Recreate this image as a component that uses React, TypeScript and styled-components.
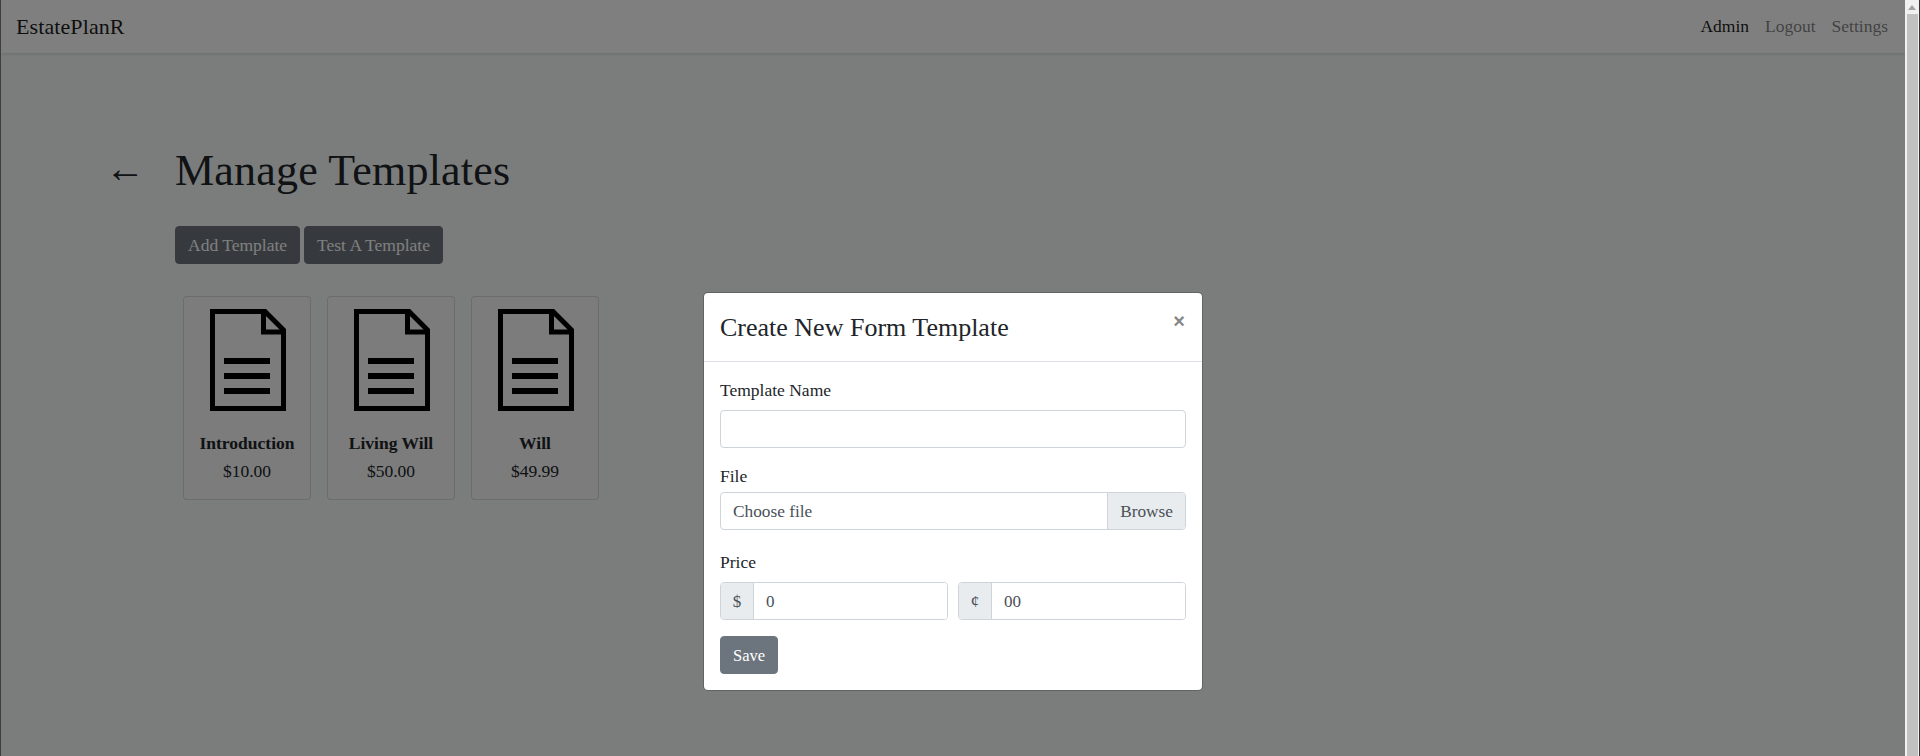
// Library
import styled, { createGlobalStyle } from "styled-components";

/*-----------------------------------------------------------------------------------*/

const templates = [
  { name: "Introduction", price: "$10.00" },
  { name: "Living Will", price: "$50.00" },
  { name: "Will", price: "$49.99" },
];

const FileIcon = () => (
  <svg width="76" height="102" viewBox="0 0 76 102" fill="none" stroke="#000">
    <path d="M2.5 2.5H55L73.5 21V99.5H2.5Z" strokeWidth="5" />
    <path d="M53.5 3V23H74" strokeWidth="5" />
    <path d="M14 52H60M14 67H60M14 82H60" strokeWidth="6" />
  </svg>
);

export default function App() {
  return (
    <Shell>
      <GlobalStyle />
      <Page>
        <Navbar>
          <Brand>EstatePlanR</Brand>
          <NavLinks>
            <NavLink $active>Admin</NavLink>
            <NavLink>Logout</NavLink>
            <NavLink>Settings</NavLink>
          </NavLinks>
        </Navbar>
        <Main>
          <BackArrow>←</BackArrow>
          <Column>
            <Title>Manage Templates</Title>
            <Actions>
              <ActionButton>Add Template</ActionButton>
              <ActionButton>Test A Template</ActionButton>
            </Actions>
            <Cards>
              {templates.map((t) => (
                <Card key={t.name}>
                  <FileIcon />
                  <CardName>{t.name}</CardName>
                  <CardPrice>{t.price}</CardPrice>
                </Card>
              ))}
            </Cards>
          </Column>
        </Main>
        <Backdrop>
          <Modal>
            <ModalHeader>
              <ModalTitle>Create New Form Template</ModalTitle>
              <Close>×</Close>
            </ModalHeader>
            <ModalBody>
              <Label>Template Name</Label>
              <Input />
              <FileLabel>File</FileLabel>
              <FileField>
                <FileText>Choose file</FileText>
                <Browse>Browse</Browse>
              </FileField>
              <Label>Price</Label>
              <PriceRow>
                <PriceGroup>
                  <Addon>$</Addon>
                  <PriceInput defaultValue="0" />
                </PriceGroup>
                <PriceGroup>
                  <Addon>¢</Addon>
                  <PriceInput defaultValue="00" />
                </PriceGroup>
              </PriceRow>
              <SaveButton>Save</SaveButton>
            </ModalBody>
          </Modal>
        </Backdrop>
      </Page>
      <Rail>
        <RailArrow />
        <RailThumb />
      </Rail>
    </Shell>
  );
}

const SERIF = `"Liberation Serif", serif`;

const GlobalStyle = createGlobalStyle`
  * { box-sizing: border-box; }
  html, body { margin: 0; height: 100%; overflow: hidden; }
  body { font-family: ${SERIF}; font-size: 17.5px; color: #212529; background: #f6f9f8; }
`;

const Shell = styled.div`
  display: flex;
  height: 756px;
  border-left: 1px solid #3a3f47;
  border-right: 1px solid #333;
`;

const Page = styled.div`
  position: relative;
  flex: 1;
  min-width: 0;
  overflow: hidden;
`;

const Navbar = styled.nav`
  display: flex;
  align-items: center;
  justify-content: space-between;
  height: 53px;
  padding: 0 17px 0 15px;
  background: #fff;
  box-shadow: 0 1px 3px rgba(0, 0, 0, 0.12);
`;

const Brand = styled.div`
  font-size: 22px;
  letter-spacing: 0.1px;
  color: rgba(0, 0, 0, 0.9);
`;

const NavLinks = styled.div`
  display: flex;
`;

const NavLink = styled.a<{ $active?: boolean }>`
  padding: 0 8px;
  color: ${({ $active }) => ($active ? "rgba(0, 0, 0, 0.9)" : "rgba(0, 0, 0, 0.5)")};

  &:last-child {
    padding-right: 0;
  }
`;

const Main = styled.main`
  display: flex;
  padding: 94px 0 0 104px;
`;

const BackArrow = styled.div`
  width: 70px;
  margin-top: -5px;
  font-size: 40px;
  line-height: 54px;
  color: #212529;
`;

const Column = styled.div`
  display: flex;
  flex-direction: column;
`;

const Title = styled.h1`
  margin: 0;
  font-size: 44px;
  font-weight: 400;
  line-height: 48px;
  letter-spacing: 0.2px;
`;

const Actions = styled.div`
  display: flex;
  gap: 4px;
  margin-top: 31px;
`;

const ActionButton = styled.button`
  height: 38px;
  padding: 0 12px;
  border: 1px solid #6c757d;
  border-radius: 4px;
  background: #6c757d;
  color: #fff;
  font-family: ${SERIF};
  font-size: 17.5px;
`;

const Cards = styled.div`
  display: flex;
  gap: 16px;
  margin: 32px 0 0 8px;
`;

const Card = styled.div`
  display: flex;
  flex-direction: column;
  align-items: center;
  width: 128px;
  height: 204px;
  padding-top: 12px;
  border: 1px solid rgba(0, 0, 0, 0.125);
  border-radius: 4px;
  background: #f8f8f8;

  svg {
    margin-left: 2px;
  }
`;

const CardName = styled.div`
  margin-top: 20px;
  font-weight: 700;
  line-height: 24px;
`;

const CardPrice = styled.div`
  margin-top: 4px;
  line-height: 24px;
`;

const Backdrop = styled.div`
  position: absolute;
  inset: 0;
  display: flex;
  justify-content: center;
  padding-top: 292px;
  background: rgba(0, 0, 0, 0.5);
`;

const Modal = styled.div`
  width: 500px;
  height: 399px;
  border: 1px solid rgba(0, 0, 0, 0.2);
  border-radius: 5px;
  background: #fff;
  background-clip: padding-box;
`;

const ModalHeader = styled.div`
  display: flex;
  justify-content: space-between;
  height: 69px;
  padding: 17px 16px 15px;
  border-bottom: 1px solid #dee2e6;
`;

const ModalTitle = styled.h4`
  margin: 0;
  font-size: 26px;
  font-weight: 400;
  line-height: 36px;
`;

const Close = styled.span`
  margin: -7px 1px 0 0;
  font-family: "Liberation Sans", sans-serif;
  font-size: 20px;
  font-weight: 700;
  line-height: 36px;
  color: #888;
`;

const ModalBody = styled.div`
  display: flex;
  flex-direction: column;
  padding: 16px;
`;

const Label = styled.label`
  display: block;
  margin-bottom: 8px;
  line-height: 24px;
`;

const FileLabel = styled(Label)`
  margin-bottom: 4px;
`;

const Input = styled.input`
  display: block;
  width: 100%;
  height: 38px;
  margin-bottom: 16px;
  padding: 0 12px;
  border: 1px solid #ced4da;
  border-radius: 4px;
  color: #495057;
  font-family: ${SERIF};
  font-size: 17px;
`;

const FileField = styled.div`
  display: flex;
  align-items: stretch;
  height: 38px;
  margin-bottom: 20px;
  border: 1px solid #ced4da;
  border-radius: 4px;
  overflow: hidden;
  color: #495057;
  font-size: 17.3px;
`;

const FileText = styled.span`
  flex: 1;
  padding: 0 12px;
  line-height: 38px;
`;

const Browse = styled.span`
  padding: 0 12px;
  border-left: 1px solid #ced4da;
  background: #e9ecef;
  line-height: 38px;
`;

const PriceRow = styled.div`
  display: grid;
  grid-template-columns: 1fr 1fr;
  gap: 10px;
  margin-bottom: 16px;
`;

const PriceGroup = styled.div`
  display: flex;
  height: 38px;
  border: 1px solid #ced4da;
  border-radius: 4px;
  overflow: hidden;
`;

const Addon = styled.span`
  width: 33px;
  border-right: 1px solid #ced4da;
  background: #e9ecef;
  color: #495057;
  font-size: 17px;
  line-height: 38px;
  text-align: center;
`;

const PriceInput = styled.input`
  flex: 1;
  min-width: 0;
  padding: 2px 12px 0;
  border: 0;
  outline: 0;
  color: #495057;
  font-family: ${SERIF};
  font-size: 17px;
`;

const SaveButton = styled.button`
  align-self: flex-start;
  height: 38px;
  padding: 2px 12px 0;
  border: 1px solid #6c757d;
  border-radius: 4px;
  background: #6c757d;
  color: #fff;
  font-family: ${SERIF};
  font-size: 16.5px;
`;

const Rail = styled.div`
  position: relative;
  flex: none;
  width: 14px;
  padding: 14px 1px 0 2px;
  background: #f1f1f1;
`;

const RailArrow = styled.div`
  position: absolute;
  top: 5px;
  left: 3px;
  border-left: 4px solid transparent;
  border-right: 4px solid transparent;
  border-bottom: 5px solid #a3a3a3;
`;

const RailThumb = styled.div`
  height: 100%;
  background: #c1c1c1;
`;
